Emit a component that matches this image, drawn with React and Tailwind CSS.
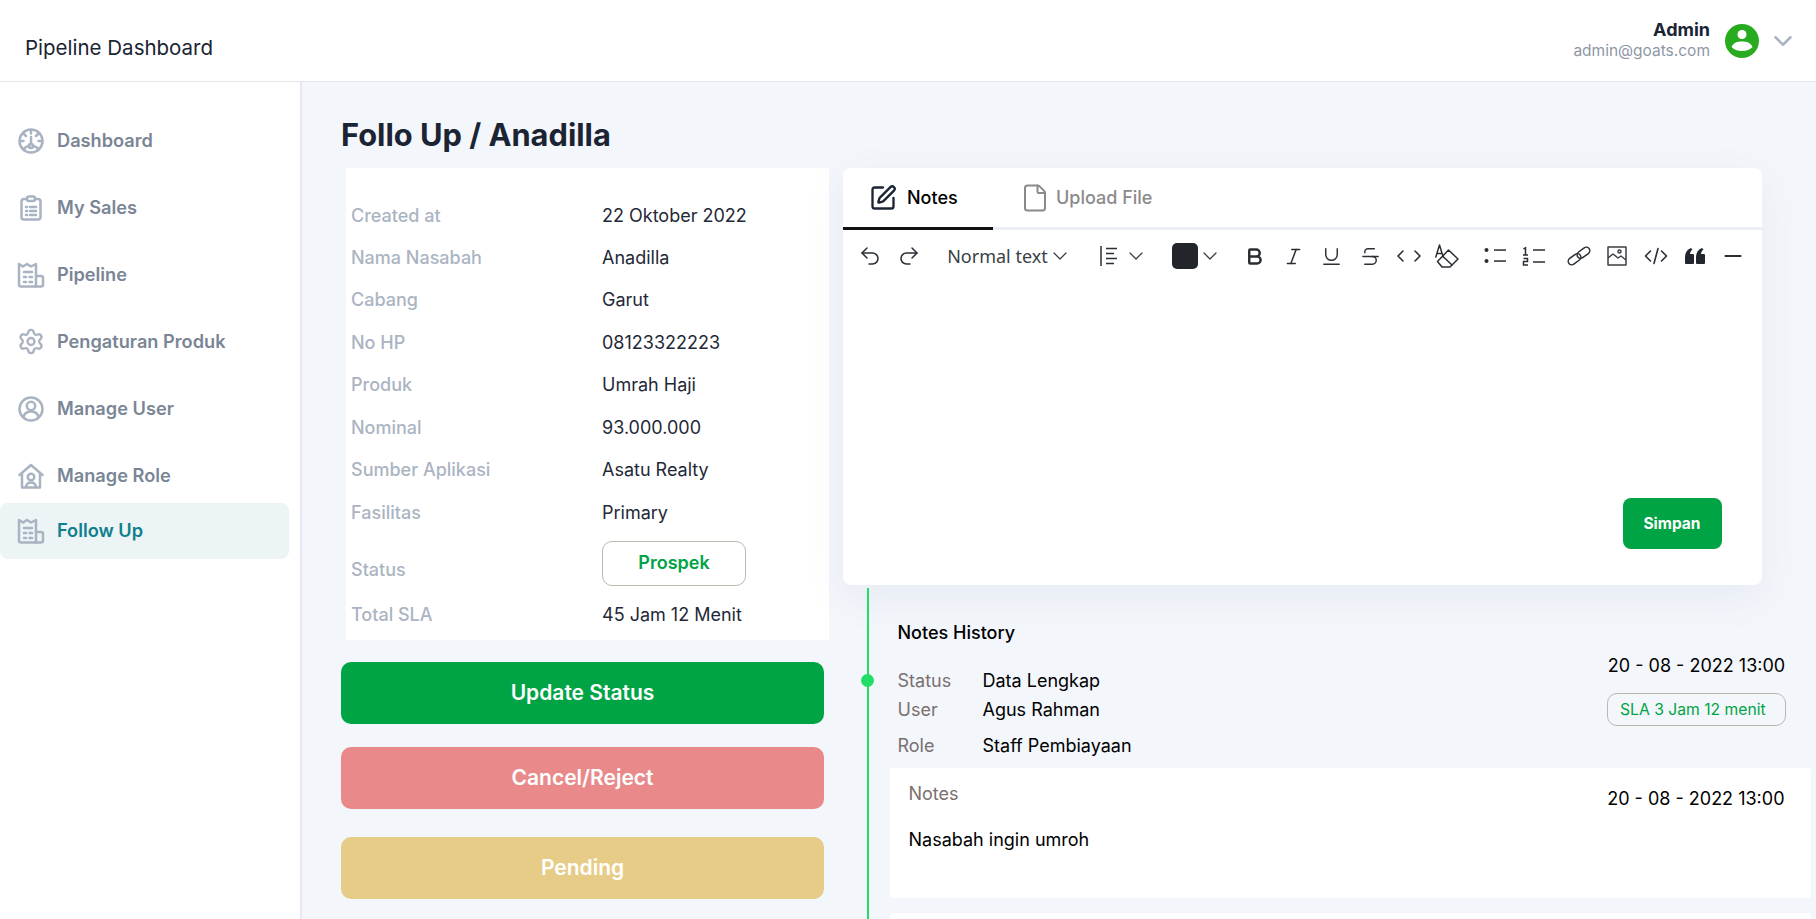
import { Undo2, Redo2, ChevronDown, SquarePen, File, Bold, Italic, Underline, Strikethrough, Minus, Settings } from "lucide-react";

/* ── Sidebar icons ─────────────────────────── */
function GaugeIcon() {
  return (
    <svg viewBox="0 0 26 26" className="w-[26px] h-[26px]" fill="none" stroke="#A9B3C1" strokeWidth="2.5" strokeLinecap="round">
      <circle cx="13" cy="13" r="11.500" />
      <path d="M13 2.500v3M2.500 13h3M23.500 13h-3M6 6l2 2M20 6l-2 2M13 9v7" />
      <circle cx="13" cy="18" r="2" />
      <path d="M5 21l5-3M21 21l-5-3" />
    </svg>
  );
}

function ClipboardIcon() {
  return (
    <svg viewBox="0 0 26 26" className="w-[26px] h-[26px]" fill="none" stroke="#A9B3C1" strokeWidth="2.5" strokeLinecap="round" strokeLinejoin="round">
      <rect x="3.500" y="4" width="19" height="20.500" rx="2.500" />
      <rect x="9" y="1.500" width="8" height="4.500" rx="2" fill="#fff" />
      <path d="M8 12h1M12 12h6M8 16h1M12 16h6M8 20h1M12 20h6" />
    </svg>
  );
}

function BuildingIcon() {
  return (
    <svg viewBox="0 0 28 26" className="w-[28px] h-[26px]" fill="none" stroke="#A9B3C1" strokeWidth="2.500" strokeLinecap="round" strokeLinejoin="round">
      <path d="M2 2l4 2.500L10 2l4 2.500L19 2v22.500H4a2 2 0 0 1-2-2z" />
      <path d="M19 14h5a2 2 0 0 1 2 2v6.500a2 2 0 0 1-2 2h-5" />
      <path d="M7 10h8M7 15h2M12.500 15h2.500M7 20h2M12.500 20h2.500" />
    </svg>
  );
}

function UserCircleIcon() {
  return (
    <svg viewBox="0 0 26 26" className="w-[26px] h-[26px]" fill="none" stroke="#A9B3C1" strokeWidth="2.500" strokeLinecap="round">
      <circle cx="13" cy="13" r="11.500" />
      <circle cx="13" cy="10" r="4.200" />
      <path d="M5.500 21c1-4 4-5.500 7.500-5.500s6.500 1.500 7.500 5.500" />
    </svg>
  );
}

function HouseUserIcon() {
  return (
    <svg viewBox="0 0 26 26" className="w-[26px] h-[26px]" fill="none" stroke="#A9B3C1" strokeWidth="2.500" strokeLinecap="round" strokeLinejoin="round">
      <path d="M1.500 12L13 2l11.500 10" />
      <path d="M4 11v13.500h18V11" />
      <circle cx="13" cy="14" r="3.300" />
      <path d="M8 24c.5-3.500 2.500-4.500 5-4.500s4.500 1 5 4.500" />
    </svg>
  );
}

function SidebarItem({ icon, label, active, className }) {
  return (
    <div className={`flex items-center pl-[17px] gap-[12px] rounded-lg ${active ? "bg-[#ECF4F6] h-[56px]" : "h-[67px]"} ${className || ""}`}>
      <div className="w-[28px] flex justify-center">{icon}</div>
      <span className={`text-[18.2px] font-semibold ${active ? "text-[#0F7F8C]" : "text-[#7A8696]"}`}>{label}</span>
    </div>
  );
}

/* ── Toolbar icons ─────────────────────────── */
function Chevron() {
  return <ChevronDown size={24} strokeWidth={1.3} className="text-[#3a3f45]" />;
}

function TB({ children }) {
  return <span className="w-[38.6px] shrink-0 flex justify-center">{children}</span>;
}

function Eraser() {
  return (
    <svg viewBox="0 0 24 24" className="w-[24px] h-[24px]" fill="none" stroke="#2A2F35" strokeWidth="1.500" strokeLinejoin="round" strokeLinecap="round">
      <path d="M0.800 13L4.500 1l3.700 12M2 9.500h5" />
      <path d="M13.500 6L23 15l-8 8H7l-4.500-5.500z" />
      <path d="M8 12.500l9 8.500" />
    </svg>
  );
}

function Bullets() {
  return (
    <svg viewBox="0 0 22 20" className="w-[22px] h-[20px]" fill="#2A2F35" stroke="none">
      <circle cx="2.500" cy="4" r="2" />
      <circle cx="2.500" cy="15" r="2" />
      <rect x="10" y="3.300" width="12" height="1.500" />
      <rect x="10" y="14.300" width="12" height="1.500" />
    </svg>
  );
}

function Numbers() {
  return (
    <svg viewBox="0 0 23 20" className="w-[23px] h-[20px]" fill="none" stroke="#2A2F35" strokeWidth="1.500">
      <path d="M1.500 3l2-1.200v7M1 9h5M1.500 12.500h4v3h-4v3.500h4.500" />
      <path d="M11 4h12M11 16h12" />
    </svg>
  );
}

function ChainIcon() {
  return (
    <svg viewBox="0 0 26 20" className="w-[26px] h-[20px]" fill="none" stroke="#2A2F35" strokeWidth="1.500">
      <g transform="rotate(-36 13 10)">
        <rect x="0.500" y="6.500" width="14" height="7" rx="3.500" />
        <rect x="11.500" y="6.500" width="14" height="7" rx="3.500" />
      </g>
    </svg>
  );
}

function ImageIcon() {
  return (
    <svg viewBox="0 0 20 20" className="w-[20px] h-[20px]" fill="none" stroke="#3A3F45" strokeWidth="1.500" strokeLinejoin="round">
      <rect x="1" y="1" width="18" height="18" />
      <circle cx="12.500" cy="5.500" r="1.500" />
      <path d="M1 12l5-4 5 4 3-2 5 4" />
    </svg>
  );
}

function CodeIcon() {
  return (
    <svg viewBox="0 0 24 20" className="w-[24px] h-[20px]" fill="none" stroke="#2A2F35" strokeWidth="1.600" strokeLinecap="round" strokeLinejoin="round">
      <path d="M6.500 5L1.500 10l5 5M17.500 5l5 5-5 5M14 2.500L10 17.500" />
    </svg>
  );
}

function InlineCode() {
  return (
    <svg viewBox="0 0 24 20" className="w-[24px] h-[20px]" fill="none" stroke="#2A2F35" strokeWidth="1.600" strokeLinecap="round" strokeLinejoin="round">
      <path d="M6 5l-5 5 5 5M18 5l5 5-5 5" />
    </svg>
  );
}

function QuoteIcon() {
  return (
    <svg viewBox="0 0 20 16" className="w-[20px] h-[16px]" fill="#22272D">
      <path d="M0 9.500C0 5 2 1.500 6 0L7.500 1.500C6 2.500 5.300 4 5 6h3a1 1 0 0 1 1 1v8a1 1 0 0 1-1 1H1a1 1 0 0 1-1-1z" />
      <path d="M11 9.500C11 5 13 1.500 17 0l1.500 1.500C17 2.500 16.300 4 16 6h3a1 1 0 0 1 1 1v8a1 1 0 0 1-1 1h-7a1 1 0 0 1-1-1z" />
    </svg>
  );
}

function AlignIcon() {
  return (
    <svg viewBox="0 0 17 20" className="w-[17px] h-[20px]" fill="none" stroke="#2A2F35" strokeWidth="1.500">
      <path d="M1 0v20M6 2.500h11M6 7.500h8M6 12.500h11M6 17.500h8" />
    </svg>
  );
}

/* ── Detail table ──────────────────────────── */
const details = [
  ["Created at", "22 Oktober 2022", "h-[42px]"],
  ["Nama Nasabah", "Anadilla", "h-[42px]"],
  ["Cabang", "Garut", "h-[42px]"],
  ["No HP", "08123322223", "h-[43px]"],
  ["Produk", "Umrah Haji", "h-[42px]"],
  ["Nominal", "93.000.000", "h-[43px]"],
  ["Sumber Aplikasi", "Asatu Realty", "h-[42px]"],
  ["Fasilitas", "Primary", "h-[43px]"],
];

function ActionButton({ label, className }) {
  return (
    <button className={`w-[483px] h-[62px] rounded-[10px] text-white text-[21px] font-semibold ${className}`}>
      {label}
    </button>
  );
}

export default function App() {
  return (
    <div className="h-[919px] overflow-hidden flex flex-col bg-white text-[#1B2433]" style={{ fontFamily: "Inter, sans-serif" }}>
      {/* ── Header ───────────────────────────────── */}
      <header className="h-[82px] shrink-0 border-b border-[#E2E6EB] flex items-center justify-between pl-[25px] pr-[18px]">
        <span className="text-[20.5px] text-[#1B2433] mt-[16px]">Pipeline Dashboard</span>
        <div className="flex items-center">
          <div className="text-right pb-[2px]">
            <div className="text-[18px] leading-[22px] font-bold">Admin</div>
            <div className="text-[15.5px] leading-[20px] text-[#8E97A6]">admin@goats.com</div>
          </div>
          <svg viewBox="0 0 34 34" className="w-[34px] h-[34px] ml-[15px]">
            <circle cx="17" cy="17" r="17" fill="#29AB1F" />
            <circle cx="17" cy="10.500" r="4.500" fill="#fff" />
            <path d="M6.500 23c2-4.500 6-5.500 10.500-5.500s8.500 1 10.500 5.500c-2.500 2.800-6 4-10.500 4s-8-1.200-10.500-4z" fill="#fff" />
          </svg>
          <ChevronDown size={30} strokeWidth={2} className="ml-[9px] text-[#A9B3C1]" />
        </div>
      </header>

      <div className="flex flex-1 min-h-0">
        {/* ── Sidebar ──────────────────────────────── */}
        <aside className="w-[302px] shrink-0 border-r-2 border-[#E6EAF0] pt-[25px] pr-[11px]">
          <SidebarItem icon={<GaugeIcon />} label="Dashboard" />
          <SidebarItem icon={<ClipboardIcon />} label="My Sales" />
          <SidebarItem icon={<BuildingIcon />} label="Pipeline" />
          <SidebarItem icon={<Settings size={29} strokeWidth={2} className="text-[#A9B3C1]" />} label="Pengaturan Produk" />
          <SidebarItem icon={<UserCircleIcon />} label="Manage User" />
          <SidebarItem icon={<HouseUserIcon />} label="Manage Role" />
          <SidebarItem icon={<BuildingIcon />} label="Follow Up" active className="-mt-[6px]" />
        </aside>

        {/* ── Main ─────────────────────────────────── */}
        <main className="flex-1 min-w-0 bg-[#F3F6FB] pl-[39px] overflow-hidden">
          <h1 className="text-[30.8px] leading-[40px] font-bold mt-[33px] mb-[13px]">Follo Up / Anadilla</h1>

          <div className="flex">
            {/* ── Left column ──────────────────────────── */}
            <div className="w-[502px] shrink-0">
              <div className="ml-[5px] w-[483px] h-[472px] bg-white pl-[5px] pt-[26.5px]">
                {details.map(([label, value, h]) => (
                  <div key={label} className={`flex items-center text-[18px] ${h}`}>
                    <span className="w-[251px] font-medium text-[#ABB4C2]">{label}</span>
                    <span className="text-[#1F2937]">{value}</span>
                  </div>
                ))}
                <div className="flex items-center text-[18px] h-[59px]">
                  <span className="w-[251px] font-medium text-[#ABB4C2] pt-[12px]">Status</span>
                  <span className="w-[144px] h-[45px] rounded-[10px] border border-[#B9B9AE] flex justify-center pt-[7px] text-[#00A445] font-semibold">Prospek</span>
                </div>
                <div className="flex items-center text-[18px] h-[31px] mt-[6px]">
                  <span className="w-[251px] font-medium text-[#ABB4C2]">Total SLA</span>
                  <span className="text-[#1F2937]">45 Jam 12 Menit</span>
                </div>
              </div>

              <div className="flex flex-col mt-[22px]">
                <ActionButton label="Update Status" className="bg-[#00A445]" />
                <ActionButton label="Cancel/Reject" className="bg-[#E98989] mt-[23px]" />
                <ActionButton label="Pending" className="bg-[#E7CC87] mt-[28px]" />
              </div>
            </div>

            {/* ── Right column ─────────────────────────── */}
            <div className="flex-1 min-w-0">
              <div className="w-[919px] h-[417px] bg-white rounded-lg shadow-[0_12px_40px_rgba(90,110,140,0.08)] flex flex-col">
                <div className="h-[62px] shrink-0 border-b-[3px] border-[#EBEEF3] flex">
                  <div className="w-[150px] h-[62px] border-b-[3px] border-[#111] flex items-center pl-[25.5px] gap-[10.5px]">
                    <SquarePen size={28} strokeWidth={2} className="text-[#1B2433]" />
                    <span className="text-[18px] font-medium text-black">Notes</span>
                  </div>
                  <div className="flex items-center pl-[27px] gap-[6px] h-[59px]">
                    <File size={30} strokeWidth={1.6} className="text-[#8A8A8A]" />
                    <span className="text-[18px] font-medium text-[#8A8A8A]">Upload File</span>
                  </div>
                </div>

                {/* toolbar */}
                <div className="h-[52px] shrink-0 flex items-center text-[#2A2F35] pl-[8px]">
                  <TB><Undo2 size={24} strokeWidth={1.5} /></TB>
                  <TB><Redo2 size={24} strokeWidth={1.5} /></TB>
                  <span className="ml-[19px] w-[101px] shrink-0 text-[18px] text-[#3A3F45] whitespace-nowrap" style={{ fontFamily: "'Noto Sans', sans-serif" }}>Normal text</span>
                  <Chevron />
                  <span className="ml-[28px]"><AlignIcon /></span>
                  <span className="ml-[7px]"><Chevron /></span>
                  <span className="ml-[24px] w-[26px] h-[26px] rounded-[5px] bg-[#22262B]" />
                  <Chevron />
                  <span className="ml-[13px]" />
                  <TB><Bold size={21} strokeWidth={2.8} /></TB>
                  <TB><Italic size={21} strokeWidth={1.7} /></TB>
                  <TB><Underline size={23} strokeWidth={1.5} /></TB>
                  <TB><Strikethrough size={23} strokeWidth={1.5} /></TB>
                  <TB><InlineCode /></TB>
                  <TB><Eraser /></TB>
                  <span className="ml-[9px]" />
                  <TB><Bullets /></TB>
                  <TB><Numbers /></TB>
                  <span className="ml-[6.5px]" />
                  <TB><ChainIcon /></TB>
                  <TB><ImageIcon /></TB>
                  <TB><CodeIcon /></TB>
                  <TB><QuoteIcon /></TB>
                  <TB><Minus size={26} strokeWidth={1.8} /></TB>
                </div>

                <div className="flex-1 flex justify-end items-end pr-[40.5px] pb-[36px]">
                  <button className="w-[99px] h-[51px] rounded-lg bg-[#00A445] text-white text-[15.5px] font-bold">Simpan</button>
                </div>
              </div>

              {/* ── Timeline ─────────────────────────────── */}
              <div className="relative pl-[29px] ml-[23.5px] border-l-2 border-[#22DD66] mt-[3px] pt-[33px] h-[400px] text-[18px]">
                <span className="absolute left-[-7.5px] top-[86px] w-[13px] h-[13px] rounded-full bg-[#22DD66]" />
                <div className="flex justify-between pr-[30px]">
                  <div>
                    <div className="font-medium text-black leading-[24px] mb-[24px]">Notes History</div>
                    <div className="flex leading-[24px]"><span className="w-[85px] text-[#7A7070]">Status</span><span className="text-black">Data Lengkap</span></div>
                    <div className="flex leading-[24px] mt-[5px]"><span className="w-[85px] text-[#7A7070]">User</span><span className="text-black">Agus Rahman</span></div>
                    <div className="flex leading-[24px] mt-[12px]"><span className="w-[85px] text-[#7A7070]">Role</span><span className="text-black">Staff Pembiayaan</span></div>
                  </div>
                  <div className="pt-[33px] w-[179px]">
                    <div className="leading-[24px] text-black text-center">20 - 08 - 2022 13:00</div>
                    <div className="mt-[15px] h-[33px] rounded-[10px] border border-[#B9B9AE] text-[15.7px] text-[#00A445] flex items-center pl-[12px]">SLA 3 Jam 12 menit</div>
                  </div>
                </div>

                <div className="ml-[-8px] mt-[10px] w-[921px] h-[130px] bg-white rounded-[3px] pl-[19px] pr-[26px] pt-[14px] flex justify-between">
                  <div>
                    <div className="text-[#7A7070] leading-[24px]">Notes</div>
                    <div className="text-black leading-[24px] mt-[22px]">Nasabah ingin umroh</div>
                  </div>
                  <div className="text-black leading-[24px] pt-[5px]">20 - 08 - 2022 13:00</div>
                </div>

                <div className="ml-[-8px] mt-[15px] w-[921px] h-[130px] bg-white rounded-[3px]" />
              </div>
            </div>
          </div>
        </main>
      </div>
    </div>
  );
}
